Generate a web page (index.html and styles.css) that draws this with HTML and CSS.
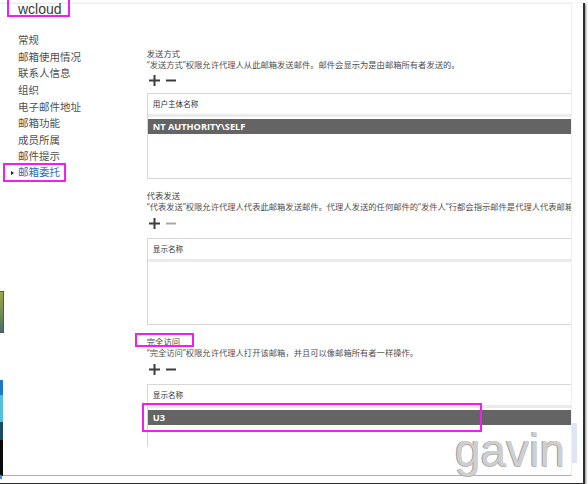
FILE: index.html
```html
<!DOCTYPE html>
<html lang="zh-CN">
<head>
<meta charset="utf-8">
<title>wcloud - 邮箱委托</title>
<link rel="stylesheet" href="styles.css">
</head>
<body>
<div class="window">
  <div class="frame">
    <div class="brand">wcloud</div>
    <div class="main">
      <nav class="nav">
        <div class="item">常规</div>
        <div class="item">邮箱使用情况</div>
        <div class="item">联系人信息</div>
        <div class="item">组织</div>
        <div class="item">电子邮件地址</div>
        <div class="item">邮箱功能</div>
        <div class="item">成员所属</div>
        <div class="item">邮件提示</div>
        <div class="item active"><span class="caret"></span>邮箱委托</div>
      </nav>
      <div class="content">
        <section class="sec s1">
          <div class="title">发送方式</div>
          <div class="desc">“发送方式”权限允许代理人从此邮箱发送邮件。邮件会显示为是由邮箱所有者发送的。</div>
          <div class="tools">
            <svg class="ico" width="11" height="11" viewBox="0 0 11 11"><path d="M0 5.5H11M5.5 0V11" stroke="#3c3c3c" stroke-width="2"/></svg>
            <svg class="ico" width="10" height="11" viewBox="0 0 10 11"><path d="M0 5.5H10" stroke="#3c3c3c" stroke-width="2"/></svg>
          </div>
          <div class="grid g1">
            <div class="ghead">用户主体名称</div>
            <div class="grow">NT AUTHORITY\SELF</div>
          </div>
        </section>
        <section class="sec s2">
          <div class="title">代表发送</div>
          <div class="desc">“代表发送”权限允许代理人代表此邮箱发送邮件。代理人发送的任何邮件的“发件人”行都会指示邮件是代理人代表邮箱所有者发送的。</div>
          <div class="tools">
            <svg class="ico" width="11" height="11" viewBox="0 0 11 11"><path d="M0 5.5H11M5.5 0V11" stroke="#3c3c3c" stroke-width="2"/></svg>
            <svg class="ico" width="10" height="11" viewBox="0 0 10 11"><path d="M0 5.5H10" stroke="#a8a8a8" stroke-width="2"/></svg>
          </div>
          <div class="grid g2">
            <div class="ghead">显示名称</div>
          </div>
        </section>
        <section class="sec s3">
          <div class="title marked">完全访问<span class="hl hl-title"></span></div>
          <div class="desc">“完全访问”权限允许代理人打开该邮箱，并且可以像邮箱所有者一样操作。</div>
          <div class="tools">
            <svg class="ico" width="11" height="11" viewBox="0 0 11 11"><path d="M0 5.5H11M5.5 0V11" stroke="#3c3c3c" stroke-width="2"/></svg>
            <svg class="ico" width="10" height="11" viewBox="0 0 10 11"><path d="M0 5.5H10" stroke="#3c3c3c" stroke-width="2"/></svg>
          </div>
          <div class="grid g3">
            <div class="ghead">显示名称</div>
            <div class="grow">U3</div>
            <span class="hl hl-row"></span>
          </div>
        </section>
      </div>
    </div>
  </div>
  <div class="thumb"></div>
  <div class="task t1"></div>
  <div class="task t2"></div>
  <div class="task t3"></div>
  <div class="watermark">gavin</div>
</div>
</body>
</html>
```
FILE: styles.css
```css
html, body {
  margin: 0;
  padding: 0;
  background: #ffffff;
}
body {
  width: 588px;
  height: 484px;
  overflow: hidden;
  font-family: "Open Sans", "Noto Sans CJK SC", sans-serif;
}
.window {
  position: relative;
  width: 583px;
  height: 480px;
  border-right: 2px solid #2e2e2e;
  border-bottom: 2px solid #2e2e2e;
  box-shadow: 1px 1px 2px rgba(0, 0, 0, 0.45);
  background: #ffffff;
}
.frame {
  margin-top: 3px;
  width: 571px;
  height: 471px;
  border-top: 1px solid #ededed;
  border-right: 1px solid #efefef;
  border-bottom: 1px solid #8fb5ee;
}
.brand {
  position: relative;
  margin-top: -4px;
  margin-left: 7px;
  width: 50px;
  height: 13px;
  padding: 2px 0 0 9px;
  border: 2px solid #f01ef0;
  border-top: none;
  font-family: "Liberation Sans", Arial, sans-serif;
  font-size: 14px;
  line-height: 15px;
  color: #3a3a3a;
}
.main {
  display: flex;
  height: 430px;
}
.nav {
  width: 112px;
  padding: 15.2px 0 0 18px;
  font-size: 10.5px;
  color: #4f4f4f;
}
.item {
  height: 16.6px;
  line-height: 16.6px;
  white-space: nowrap;
}
.item.active {
  width: fit-content;
  height: 15px;
  line-height: 15px;
  margin-top: -1.8px;
  margin-left: -15px;
  padding: 0 4px 0 6px;
  border: 2px solid #f01ef0;
  color: #2b6cb8;
}
.caret {
  display: inline-block;
  width: 0;
  height: 0;
  margin-right: 4px;
  vertical-align: 1px;
  border-left: 3px solid #1a1a1a;
  border-top: 2.5px solid transparent;
  border-bottom: 2.5px solid transparent;
}
.content {
  width: 442px;
  padding: 30.5px 0 0 17px;
  overflow: hidden;
  box-sizing: border-box;
  height: 430px;
}
.sec {
  font-size: 8.3px;
}
.s2 { margin-top: 10.5px; }
.s3 { margin-top: 11px; }
.title {
  line-height: 11px;
  color: #454545;
  white-space: nowrap;
}
.title.marked {
  position: relative;
  width: fit-content;
}
.desc {
  line-height: 11px;
  color: #505050;
  white-space: nowrap;
}
.tools {
  display: flex;
  gap: 6px;
  height: 11px;
  margin: 6px 0 9px 2px;
}
.s1 .tools {
  margin-top: 5px;
  margin-bottom: 7.5px;
}
.ico {
  display: block;
}
.grid {
  position: relative;
  width: 440px;
  border: 1px solid #d6d6d6;
  background: #ffffff;
}
.g1 { height: 84px; }
.g2 { height: 85px; }
.g3 { height: 120px; }
.ghead {
  height: 20px;
  line-height: 20px;
  padding-left: 5px;
  font-size: 7.6px;
  color: #333333;
  border-bottom: 3px solid #e9ebec;
}
.grow {
  margin-top: 2px;
  height: 15px;
  line-height: 15px;
  padding-left: 5px;
  background: #646464;
  color: #ffffff;
  font-family: "Open Sans", sans-serif;
  font-weight: 700;
  font-size: 9.2px;
}
.hl {
  position: absolute;
  border: 2px solid #f01ef0;
  box-sizing: border-box;
}
.hl-title {
  left: -12px;
  top: -2.5px;
  width: 59px;
  height: 14px;
}
.hl-row {
  left: -6px;
  top: 18px;
  width: 340px;
  height: 29px;
}
.thumb {
  position: absolute;
  left: 572px;
  top: 420px;
  width: 5px;
  height: 40px;
  background: #e1e4f2;
}
.task {
  position: absolute;
  left: 0;
  width: 3px;
}
.t1 {
  top: 288px;
  height: 40px;
  width: 3px;
  border: 1px solid #55555e;
  border-left: none;
  background: linear-gradient(180deg, #a0a848, #6d8a55 60%, #4d6a70);
}
.t2 {
  top: 377px;
  height: 96px;
  background: linear-gradient(180deg, #1f77c8 0, #1f77c8 15px, #55bde0 15px, #55bde0 42px, #1b4a62 42px, #1b4a62 60px, #0a0a0a 60px);
}
.t3 {
  top: 472px;
  height: 4px;
  width: 2px;
  background: #3a8ae0;
}
.watermark {
  position: absolute;
  left: 455px;
  top: 424px;
  font-family: "Liberation Sans", Arial, sans-serif;
  font-size: 46px;
  line-height: 46px;
  color: #cfcfcf;
  text-shadow: -1px 0 #9c9c9c, 0 1px #b5b5b5;
}
```
